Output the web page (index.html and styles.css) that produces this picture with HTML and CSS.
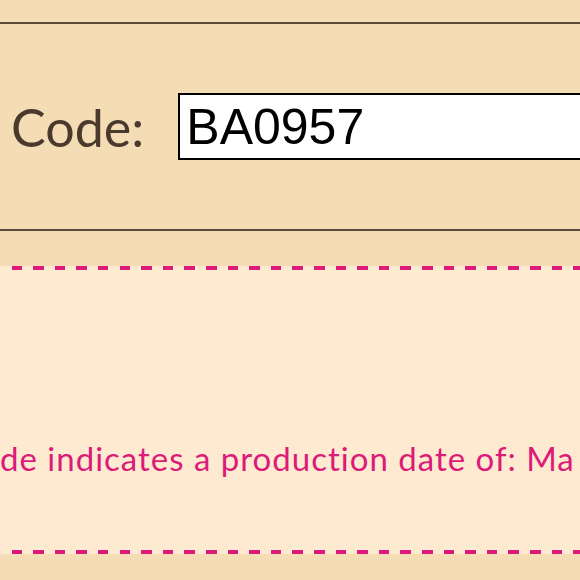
FILE: index.html
```html
<!DOCTYPE html>
<html lang="en">
<head>
<meta charset="utf-8">
<title>Batch Code</title>
<link rel="stylesheet" href="styles.css">
</head>
<body>
<main class="page">
  <section class="code-bar">
    <label class="code-label" for="code">Code:</label>
    <input class="code-input" id="code" type="text" value="BA0957">
  </section>
  <section class="result">
    <p class="result-text">de indicates a production date of: Ma</p>
  </section>
</main>
</body>
</html>
```
FILE: styles.css
```css
html, body {
  margin: 0;
  padding: 0;
}
body {
  background: #f4ddb5;
  width: 580px;
  height: 580px;
  overflow: hidden;
}
.page {
  padding-top: 22px;
  display: flex;
  flex-direction: column;
}
.code-bar {
  border-top: 2px solid #5b4a38;
  border-bottom: 2px solid #5b4a38;
  height: 205px;
  display: flex;
  align-items: center;
  padding-left: 11px;
  gap: 34px;
}
.code-label {
  font-family: "Lato", "Open Sans", sans-serif;
  font-size: 52px;
  color: #4a3a2e;
  line-height: 1;
}
.code-input {
  flex: none;
  width: 500px;
  height: 67px;
  box-sizing: border-box;
  margin: 0;
  border: 2px solid #000;
  padding: 0 6px;
  background: #fff;
  font-family: "Liberation Sans", Arial, sans-serif;
  font-size: 50px;
  color: #000;
  outline: none;
}
.result {
  margin: 35px -10px 0;
  height: 288px;
  box-sizing: border-box;
  padding-top: 176px;
  background:
    repeating-linear-gradient(90deg, #dc1a7a 0 10.5px, transparent 10.5px 21.6px) 0 0 / 100% 4px no-repeat,
    repeating-linear-gradient(90deg, #dc1a7a 0 10.5px, transparent 10.5px 21.6px) 0 100% / 100% 4px no-repeat,
    #fdead0;
}
.result-text {
  margin: 0 0 0 10px;
  white-space: nowrap;
  font-family: "Lato", "Open Sans", sans-serif;
  font-size: 33px;
  letter-spacing: 1px;
  font-variant-ligatures: none;
  color: #dc1a7a;
  line-height: 1;
}
```
